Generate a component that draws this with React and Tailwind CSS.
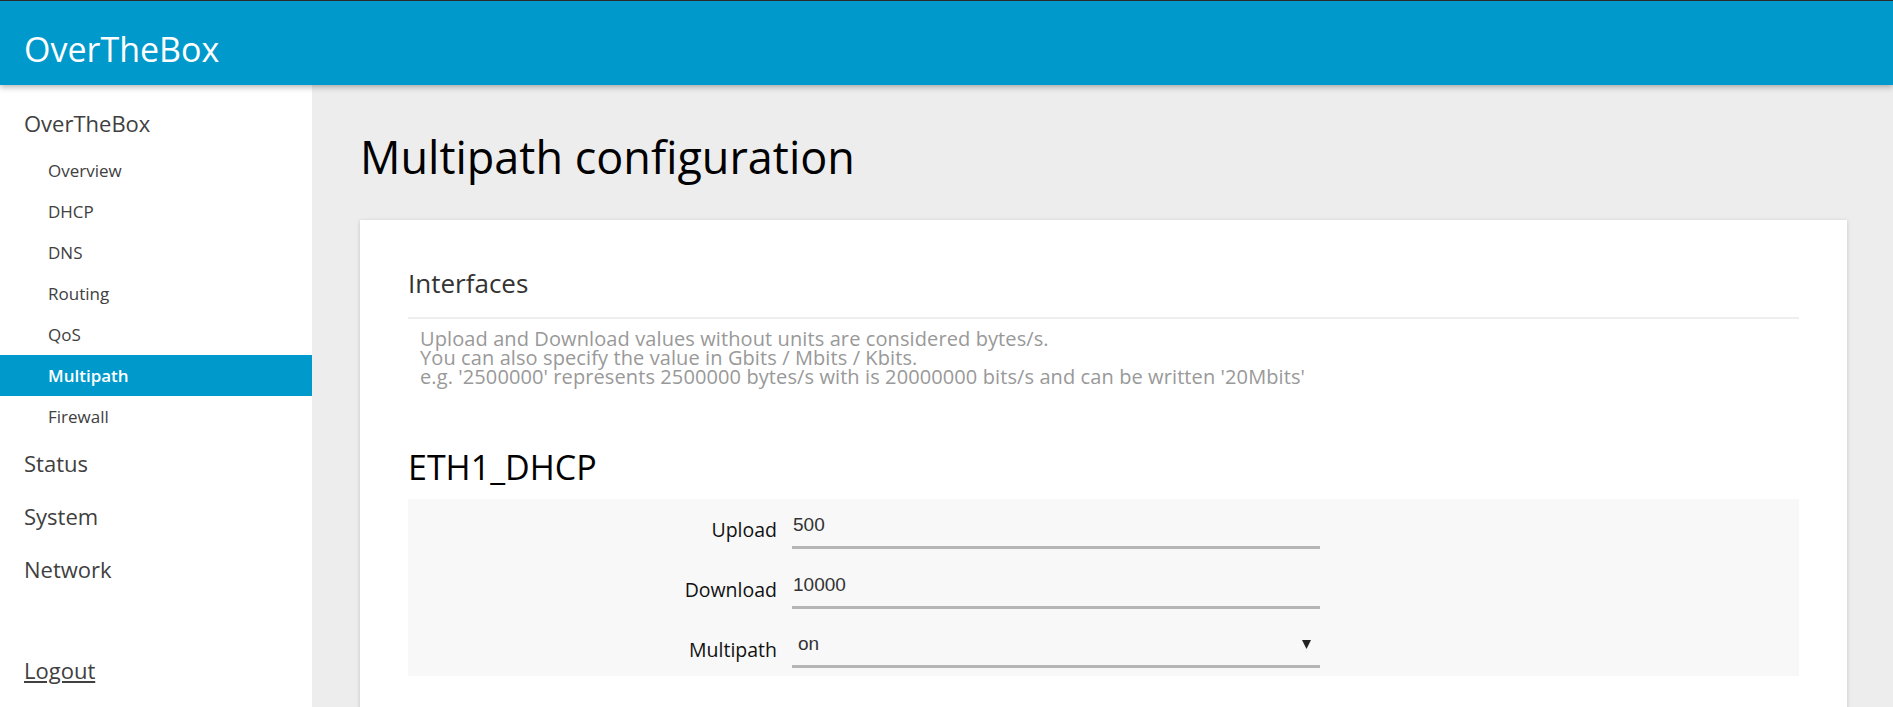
import React from 'react';

const subItems = ['Overview', 'DHCP', 'DNS', 'Routing', 'QoS', 'Multipath', 'Firewall'];
const topItems = ['Status', 'System', 'Network'];

// Sidebar menu — top level entries 53px, sub entries 41px
const Sidebar = () => (
  <aside className="w-[312px] shrink-0 bg-white pt-3 text-[#404040]">
    <div className="pl-6 text-[22px] leading-[53px]">OverTheBox</div>
    {subItems.map((item) => (
      <div
        key={item}
        className={
          item === 'Multipath'
            ? 'bg-[#0099cc] pl-12 text-[17px] font-semibold leading-[41px] text-white'
            : 'pl-12 text-[17px] leading-[41px]'
        }
      >
        {item}
      </div>
    ))}
    {topItems.map((item) => (
      <div key={item} className="pl-6 text-[22px] leading-[53px]">{item}</div>
    ))}
    <div className="mt-12 pl-6 text-[22px] leading-[53px]">
      <a href="#" className="underline">Logout</a>
    </div>
  </aside>
);

const TextField = ({ label, value }) => (
  <div className="flex items-start gap-[15px]">
    <div className="w-[369px] pt-[8px] text-right text-[19.5px] leading-[22px] text-[#111]">{label}</div>
    <div className="h-[38px] w-[528px] border-b-[3px] border-[#b5b5b5] pl-[1px] pt-[3px] font-['Liberation_Sans',Arial,sans-serif] text-[19px] leading-[22px] text-[#333]">
      {value}
    </div>
  </div>
);

const SelectField = ({ label, value }) => (
  <div className="flex items-start gap-[15px]">
    <div className="w-[369px] pt-[8px] text-right text-[19.5px] leading-[22px] text-[#111]">{label}</div>
    <div className="flex h-[37px] w-[528px] items-start justify-between border-b-[3px] border-[#b5b5b5] pl-[6px] pr-[9px] pt-[2px] font-['Liberation_Sans',Arial,sans-serif] text-[19px] leading-[22px] text-[#333]">
      <span>{value}</span>
      <svg width="9" height="9" viewBox="0 0 9 9" className="mt-[7px]">
        <polygon points="0,0 9,0 4.5,9" fill="#222" />
      </svg>
    </div>
  </div>
);

export default function App() {
  return (
    <div className="min-h-screen bg-[#ededed] font-['Open_Sans',sans-serif]">
      <header className="relative z-10 h-[85px] border-t border-[#2b2b2b] bg-[#0099cc] pl-6 pt-[28px] shadow-[0_2px_6px_rgba(0,0,0,0.3)]">
        <h1 className="text-[34px] leading-[40px] text-white">OverTheBox</h1>
      </header>
      <div className="flex">
        <Sidebar />
        <main className="flex-1 pl-12 pr-[46px] pt-[45px]">
          <h2 className="text-[45px] leading-[54px] text-black">Multipath configuration</h2>
          <div className="mt-[36px] bg-white px-12 pb-16 pt-[47px] shadow-[0_1px_4px_rgba(0,0,0,0.18)]">
            <h3 className="border-b-2 border-[#eeeeee] pb-[18px] text-[26px] leading-[32px] text-[#333]">Interfaces</h3>
            <div className="mt-[10px] pl-3 text-[20px] leading-[19px] tracking-[0.1px] text-[#999]">
              <div>Upload and Download values without units are considered bytes/s.</div>
              <div>You can also specify the value in Gbits / Mbits / Kbits.</div>
              <div>e.g. '2500000' represents 2500000 bytes/s with is 20000000 bits/s and can be written '20Mbits'</div>
            </div>
            <h3 className="mb-3 mt-[61px] text-[34px] leading-[40px] text-black">ETH1_DHCP</h3>
            <div className="flex flex-col gap-[22px] bg-[#f8f8f8] pb-2 pt-3">
              <TextField label="Upload" value="500" />
              <TextField label="Download" value="10000" />
              <SelectField label="Multipath" value="on" />
            </div>
          </div>
        </main>
      </div>
    </div>
  );
}
